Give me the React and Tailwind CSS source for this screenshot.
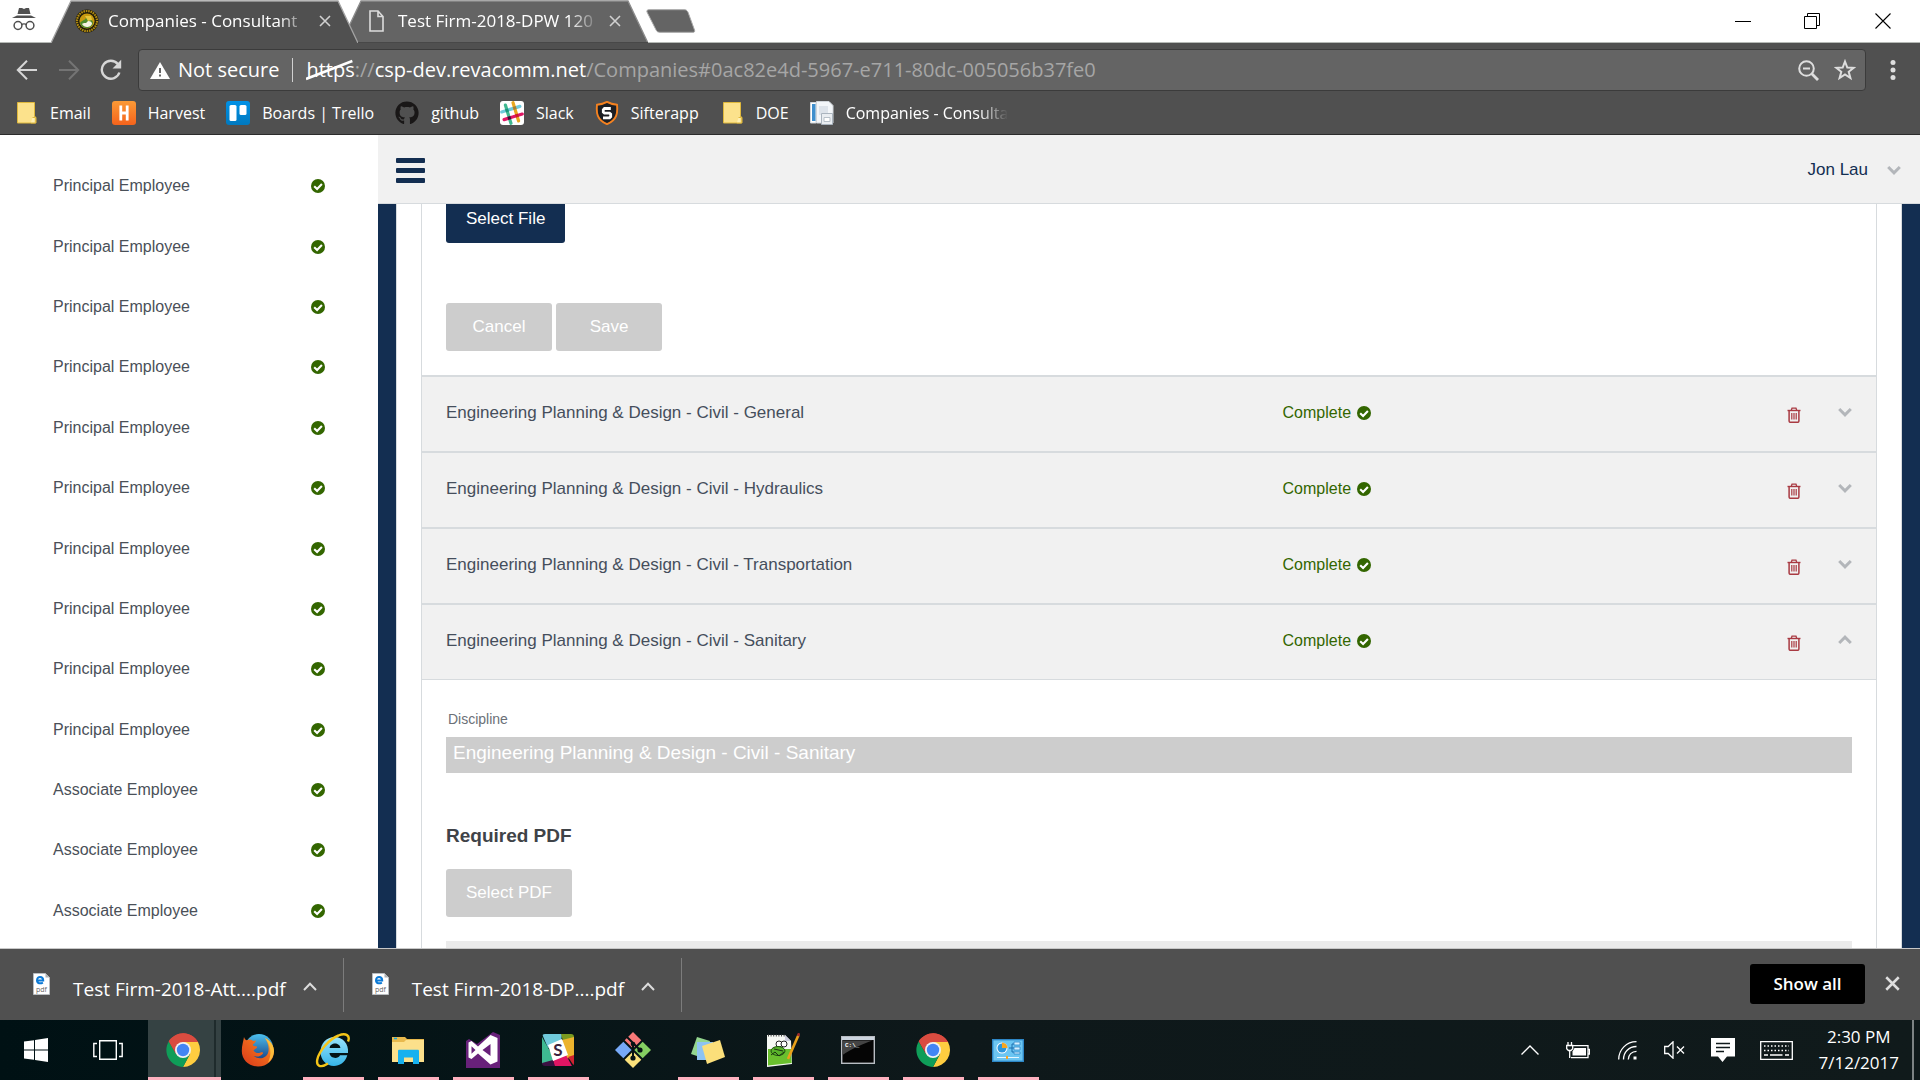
import React from 'react';
import { FaGithub } from 'react-icons/fa';

/* ---------- shared icons ---------- */

function CheckCircle() {
  return (
    <svg viewBox="0 0 14 14" className="size-[14px] shrink-0" aria-hidden="true">
      <circle cx="7" cy="7" r="7" fill="#336600" />
      <path d="M3.2 7.2 6.1 10 10.9 5.1" fill="none" stroke="#fff" strokeWidth="2.1" />
    </svg>
  );
}

function TrashIcon() {
  return (
    <svg viewBox="0 0 14 16" className="h-4 w-[14px]" fill="none" stroke="#a93a42" aria-hidden="true">
      <path d="M.5 3.5h13" strokeWidth="1.4" />
      <path d="M4.3 3.2 5 1.2h4l.7 2" strokeWidth="1.3" />
      <path d="M2.1 3.8V14c0 .8.5 1.3 1.2 1.3h7.4c.7 0 1.2-.5 1.2-1.3V3.8" strokeWidth="1.5" />
      <path d="M4.8 6v6.6M7 6v6.6M9.2 6v6.6" strokeWidth="1.2" />
    </svg>
  );
}

function ChevronThick({ up = false }) {
  return (
    <svg viewBox="0 0 14 10" className="h-[10px] w-[14px]" fill="none" stroke="#b3b6ba" strokeWidth="3" aria-hidden="true">
      <path d={up ? 'M1.2 8 7 2.2 12.8 8' : 'M1.2 2 7 7.8 12.8 2'} />
    </svg>
  );
}

function CloseX({ className, weight = 1.6 }) {
  return (
    <svg viewBox="0 0 12 12" className={className} fill="none" stroke="currentColor" strokeWidth={weight} aria-hidden="true">
      <path d="M1 1 11 11M11 1 1 11" />
    </svg>
  );
}

/* ---------- browser tabs ---------- */

function SealIcon() {
  return (
    <svg viewBox="0 0 24 24" className="size-6" aria-hidden="true">
      <circle cx="12" cy="12" r="11.5" fill="#1f1b0a" />
      <circle cx="12" cy="12" r="10" fill="none" stroke="#b08a12" strokeWidth="2.2" strokeDasharray="1.6 .8" />
      <circle cx="12" cy="12" r="7.6" fill="#c79a10" />
      <path d="M5 14c2-3 4-2 6-5 2 1 5 0 7 4 0 4-3 6-6 6s-6-1-7-5z" fill="#4f8a2c" />
      <path d="M7 15c2-2 4 0 5-2s4-1 5 1c0 3-3 4-5 4s-4-1-5-3z" fill="#f5f2e0" />
      <path d="M10 7h6l1 4-4 1z" fill="#e5c63b" />
    </svg>
  );
}

function PageIcon() {
  return (
    <svg viewBox="0 0 15 22" className="h-[22px] w-[15px]" fill="none" stroke="#dcdcdc" strokeWidth="1.6" aria-hidden="true">
      <path d="M1 1h8l5 5.500V21H1zM9 1v5.500h5" />
    </svg>
  );
}

function Tab({ active = false, icon, title }) {
  return (
    <div className={active ? 'relative z-10 h-[43px] w-[307px]' : 'relative -ml-[17px] h-[43px] w-[307px]'}>
      <svg viewBox="0 0 307 43" preserveAspectRatio="none" className="absolute inset-0 size-full" aria-hidden="true">
        <path d="M0 43 20 1H287L307 43z" fill={active ? '#505050' : '#646464'} />
        <path d="M0 43 20 1H287L307 43" fill="none" stroke={active ? '#a3a3a3' : '#8c8c8c'} strokeWidth="1.3" />
        {!active && <path d="M0 42.500H307" stroke="#484848" />}
      </svg>
      <div className="relative flex h-full items-center pr-[27px] pb-1.5 pl-6">
        <span className="flex w-[33px] shrink-0 items-center justify-start pt-1">{icon}</span>
        <span className="mt-1 min-w-0 flex-1 text-[17px] leading-6 whitespace-nowrap text-white [mask-image:linear-gradient(to_right,black_84%,transparent)]">
          {title}
        </span>
        <button aria-label="Close tab" className="mt-1 ml-2 shrink-0 text-[#d0d0d0]">
          <CloseX className="size-3" />
        </button>
      </div>
    </div>
  );
}

function TabStrip() {
  return (
    <div className="flex h-[43px] shrink-0 items-stretch border-b border-[#b5b9b5] bg-white">
      <div className="flex w-[51px] shrink-0 items-start pt-2 pl-3">
        <svg viewBox="0 0 24 23" className="h-[23px] w-6" aria-label="Incognito">
          <path d="M7 0h3l2 1 2-1h3l1.500 6H5.500z" fill="#505050" />
          <path d="M0 10 5 7.500h14l5 2.500z" fill="#505050" />
          <circle cx="6" cy="17.500" r="3.900" fill="none" stroke="#505050" strokeWidth="1.500" />
          <circle cx="18" cy="17.500" r="3.900" fill="none" stroke="#505050" strokeWidth="1.500" />
          <path d="M9.500 17c1-1.500 4-1.500 5 0" fill="none" stroke="#505050" strokeWidth="1.300" />
        </svg>
      </div>
      <Tab active icon={<SealIcon />} title="Companies - Consultant" />
      <Tab icon={<span className="pl-1"><PageIcon /></span>} title="Test Firm-2018-DPW 120" />
      <button aria-label="New tab" className="-ml-0.5">
        <svg viewBox="0 0 50 24" className="h-6 w-[50px]" aria-hidden="true">
          <path d="M3 .7h35c2 0 3 .6 4 2.500L48.500 21c.6 1.500 0 2.300-1.500 2.300H14c-2 0-3.200-.7-4-2.500L1 3C.5 1.500 1.300.7 3 .7z" fill="#646464" stroke="#a8a8a8" />
        </svg>
      </button>
      <div className="ml-auto flex h-[41px] items-center text-black">
        <button aria-label="Minimize" className="flex h-full w-[69px] items-center justify-center">
          <svg viewBox="0 0 16 16" className="size-4" stroke="currentColor"><path d="M0 8.500h16" /></svg>
        </button>
        <button aria-label="Restore" className="flex h-full w-[69px] items-center justify-center">
          <svg viewBox="0 0 16 16" className="size-4" fill="none" stroke="currentColor"><path d="M.5 3.500h12v12H.5zM3.500 3.500v-3h12v12h-3" /></svg>
        </button>
        <button aria-label="Close window" className="flex h-full w-[74px] items-center justify-center">
          <svg viewBox="0 0 16 16" className="size-4" fill="none" stroke="currentColor" strokeWidth="1.1"><path d="M.5.5l15 15M15.500.5l-15 15" /></svg>
        </button>
      </div>
    </div>
  );
}

/* ---------- toolbar ---------- */

function Toolbar() {
  return (
    <div className="flex h-[54px] shrink-0 items-center bg-[#505050] pr-6 pl-4">
      <button aria-label="Back" className="w-[42px] text-[#d6d6d6]">
        <svg viewBox="0 0 22 20" className="h-5 w-[22px]" fill="none" stroke="currentColor" strokeWidth="2"><path d="M21 10H2M11 .8 1.800 10l9.200 9.200" /></svg>
      </button>
      <button aria-label="Forward" disabled className="w-[42px] text-[#747474]">
        <svg viewBox="0 0 22 20" className="h-5 w-[22px]" fill="none" stroke="currentColor" strokeWidth="2"><path d="M1 10h19M11 .8l9.200 9.200-9.200 9.200" /></svg>
      </button>
      <button aria-label="Reload" className="w-[38px] text-[#d6d6d6]">
        <svg viewBox="0 0 22 22" className="size-[22px]" fill="none" stroke="currentColor" strokeWidth="2.400"><path d="M17.800 5A9 9 0 1 0 19.400 13.500" /><path d="M21.200.8v8.700h-8.700z" fill="currentColor" stroke="none" /></svg>
      </button>
      <div className="flex h-[42px] min-w-0 flex-1 items-center rounded border border-[#3b3b3b] bg-[#646464] pr-[9px] pl-[11px] text-[20px] leading-7 whitespace-nowrap text-white">
        <svg viewBox="0 0 20 17" className="h-[17px] w-5" aria-hidden="true">
          <path d="M10 0l10 17H0z" fill="#fff" />
          <path d="M10 6v5M10 12.500v2" stroke="#646464" strokeWidth="2" />
        </svg>
        <span className="ml-2">Not secure</span>
        <span className="mx-[13px] h-6 w-px bg-[#d0d0d0]" />
        <span className="relative">
          https
          <svg viewBox="0 0 50 28" preserveAspectRatio="none" className="absolute inset-0 size-full" aria-hidden="true">
            <path d="M0 23 48 5" stroke="#fff" strokeWidth="2.600" />
          </svg>
        </span>
        <span className="text-[#a6a6a6]">://</span>
        <span>csp-dev.revacomm.net</span>
        <span className="text-[#a6a6a6]">/Companies#0ac82e4d-5967-e711-80dc-005056b37fe0</span>
        <span className="ml-auto flex items-center gap-[15px] text-[#dedede]">
          <button aria-label="Zoom">
            <svg viewBox="0 0 21 21" className="block size-[21px]" fill="none" stroke="currentColor" strokeWidth="2"><circle cx="8.500" cy="8.500" r="7.300" /><path d="M5 8.500h7" /><path d="M13.800 13.800 20 20" strokeWidth="2.800" /></svg>
          </button>
          <button aria-label="Bookmark this page">
            <svg viewBox="0 0 22 22" className="block size-[22px]" fill="none" stroke="currentColor" strokeWidth="2"><path d="M11 2.500l2.300 6 6.400.3-5 4 1.700 6.200-5.400-3.500L5.600 19l1.700-6.200-5-4 6.400-.3z" /></svg>
          </button>
        </span>
      </div>
      <button aria-label="Menu" className="ml-6 text-[#dedede]">
        <svg viewBox="0 0 6 22" className="h-[22px] w-[6px]" fill="currentColor"><circle cx="3" cy="3.500" r="2.500" /><circle cx="3" cy="11" r="2.500" /><circle cx="3" cy="18.500" r="2.500" /></svg>
      </button>
    </div>
  );
}

/* ---------- bookmarks ---------- */

function FolderMark() {
  return (
    <svg viewBox="0 0 24 24" className="size-6" aria-hidden="true">
      <path d="M3.500 1.500h17v14l1.500.8v5.700H3.500z" fill="#fce28c" stroke="#dfb83c" />
      <path d="M18.500 16.500h2.800v5.500h-4.500" fill="#fff0b4" stroke="#dfb83c" />
    </svg>
  );
}

function HarvestMark() {
  return (
    <svg viewBox="0 0 24 24" className="size-6" aria-hidden="true">
      <defs><linearGradient id="hv" x1="0" y1="0" x2="0" y2="1"><stop offset="0" stopColor="#fb9a36" /><stop offset="1" stopColor="#f5631c" /></linearGradient></defs>
      <rect width="24" height="24" rx="3" fill="url(#hv)" />
      <path d="M8.800 4.500v15M15.200 4.500v15M9 12h6" stroke="#fff" strokeWidth="2.800" />
    </svg>
  );
}

function TrelloMark() {
  return (
    <svg viewBox="0 0 24 24" className="size-6" aria-hidden="true">
      <defs><linearGradient id="tr" x1="0" y1="0" x2="0" y2="1"><stop offset="0" stopColor="#0091e6" /><stop offset="1" stopColor="#0079bf" /></linearGradient></defs>
      <rect width="24" height="24" rx="3" fill="url(#tr)" />
      <rect x="3.500" y="4" width="7" height="16" rx="1.500" fill="#fff" />
      <rect x="13.500" y="4" width="7" height="10" rx="1.500" fill="#fff" />
    </svg>
  );
}

function SlackMark() {
  return (
    <svg viewBox="0 0 24 24" className="size-6" aria-hidden="true">
      <rect width="24" height="24" rx="3" fill="#fff" />
      <g transform="rotate(-17 12 12)" strokeWidth="3.200" strokeLinecap="round">
        <path d="M2.500 8h19" stroke="#6ecadc" />
        <path d="M8 2.500v19" stroke="#3eb890" />
        <path d="M16 2.500v19" stroke="#e9a820" />
        <path d="M2.500 16h19" stroke="#e01765" />
        <path d="M6.500 16h3" stroke="#361238" strokeLinecap="butt" />
        <path d="M14.500 16h3" stroke="#cc2027" strokeLinecap="butt" />
        <path d="M14.500 8h3" stroke="#a2803a" strokeLinecap="butt" />
        <path d="M6.500 8h3" stroke="#1a937d" strokeLinecap="butt" />
      </g>
    </svg>
  );
}

function SifterMark() {
  return (
    <svg viewBox="0 0 24 24" className="size-6" aria-hidden="true">
      <path d="M12 .8c3 1.700 6 2.600 10 3 .8 8 .2 15-10 19.400C1.800 18.800 1.200 11.800 2 3.800c4-.4 7-1.300 10-3z" fill="#1c1f24" stroke="#f58220" strokeWidth="1.900" />
      <path d="M15.800 7.500H9.500L8.300 8.800v2.400l1.200 1h5l1.200 1v2.400l-1.200 1.200H8" fill="none" stroke="#fff" strokeWidth="2.800" />
    </svg>
  );
}

function PageStackMark() {
  return (
    <svg viewBox="0 0 24 24" className="size-6" aria-hidden="true">
      <path d="M.5 1.500H6V22H.5z" fill="#fff" stroke="#cfd6dc" />
      <path d="M2 3h3.500v17H2z" fill="#3f8fcd" />
      <path d="M6.500.5H19l4 4V22H6.500z" fill="#f3f6f9" stroke="#d0d5da" />
      <path d="M9 5h9v9H9z" fill="#dde3ea" />
      <path d="M11.500 12.500h11v11h-11z" fill="#e9edf1" stroke="#aab4be" />
      <path d="M14 16.500h6v4h-6z" fill="#fff" stroke="#b7c0c8" />
    </svg>
  );
}

const bookmarks = [
  { label: 'Email', icon: <FolderMark /> },
  { label: 'Harvest', icon: <HarvestMark /> },
  { label: 'Boards | Trello', icon: <TrelloMark /> },
  { label: 'github', icon: <FaGithub className="size-6 text-[#191717]" /> },
  { label: 'Slack', icon: <SlackMark /> },
  { label: 'Sifterapp', icon: <SifterMark /> },
  { label: 'DOE', icon: <FolderMark /> },
  { label: 'Companies - Consulta', icon: <PageStackMark />, faded: true },
];

function Bookmarks() {
  return (
    <nav aria-label="Bookmarks" className="flex h-[38px] shrink-0 items-start gap-[21px] border-b border-[#2b2b2b] bg-[#505050] pl-[14px] text-[16px] leading-6 text-white">
      {bookmarks.map((b) => (
        <a key={b.label} href="#" className="flex items-center gap-3 pt-1">
          {b.icon}
          {b.faded ? (
            <span className="whitespace-nowrap [mask-image:linear-gradient(to_right,black_82%,transparent)]">{b.label}</span>
          ) : (
            <span className="whitespace-nowrap">{b.label}</span>
          )}
        </a>
      ))}
    </nav>
  );
}

/* ---------- page ---------- */

const employees = [
  ...Array(10).fill('Principal Employee'),
  ...Array(3).fill('Associate Employee'),
];

function Sidebar() {
  return (
    <aside className="flex w-[378px] shrink-0 flex-col bg-white pt-[21px] pb-[7px]">
      <ul className="flex flex-1 flex-col">
        {employees.map((name, i) => (
          <li key={i} className="flex flex-1">
            <a href="#" className="flex flex-1 items-center justify-between px-[53px] text-[16px] leading-6 text-[#4a5058]">
              {name}
              <CheckCircle />
            </a>
          </li>
        ))}
      </ul>
    </aside>
  );
}

const disciplines = [
  { name: 'Engineering Planning & Design - Civil - General' },
  { name: 'Engineering Planning & Design - Civil - Hydraulics' },
  { name: 'Engineering Planning & Design - Civil - Transportation' },
  { name: 'Engineering Planning & Design - Civil - Sanitary', open: true },
];

function DisciplineRow({ name, open }) {
  return (
    <div className="grid h-[76px] grid-cols-[59.5%_1fr_auto_auto] items-center border-t-2 border-[#d7dbde] bg-[#f1f1f1] px-6 pb-0.5">
      <span className="text-[17px] leading-6 text-[#454e5c]">{name}</span>
      <span className="flex items-center gap-1.5 text-[16px] leading-6 text-[#336600]">
        Complete
        <CheckCircle />
      </span>
      <button aria-label={'Delete ' + name} className="mt-1 mr-[37px]"><TrashIcon /></button>
      <button aria-label={(open ? 'Collapse ' : 'Expand ') + name} className="-mt-0.5"><ChevronThick up={open} /></button>
    </div>
  );
}

function Content() {
  return (
    <main className="flex min-w-0 flex-1 flex-col">
      <header className="flex h-[69px] shrink-0 items-center justify-between border-b border-[#d7dbde] bg-[#f1f1f1] pt-0.5 pr-[19px] pl-[18px]">
        <button aria-label="Toggle navigation" className="flex w-[29px] flex-col gap-[5px]">
          <span className="h-[5px] rounded-[1px] bg-[#132e51]" />
          <span className="h-[5px] rounded-[1px] bg-[#132e51]" />
          <span className="h-[5px] rounded-[1px] bg-[#132e51]" />
        </button>
        <button className="flex items-center gap-[19px] text-[17px] leading-6 text-[#132e51]">
          Jon Lau
          <ChevronThick />
        </button>
      </header>
      <div className="min-h-0 flex-1 overflow-hidden border-x-[18px] border-[#132e51]">
        <div className="border-x border-[#d7dbde] bg-white px-6">
          <section className="-mt-[9px] border-x border-[#d7dbde]">
            <div className="px-6 pb-6">
              <button className="block h-12 rounded-[3px] bg-[#132e51] px-5 text-[17px] leading-6 text-white">Select File</button>
              <div className="mt-[60px] flex gap-1">
                <button disabled className="h-12 w-[106px] rounded-[3px] bg-[#cdcdcd] text-[17px] leading-6 text-white">Cancel</button>
                <button disabled className="h-12 w-[106px] rounded-[3px] bg-[#cdcdcd] text-[17px] leading-6 text-white">Save</button>
              </div>
            </div>
            {disciplines.map((d) => <DisciplineRow key={d.name} {...d} />)}
            <div className="border-t border-[#d7dbde] px-6 pt-[29px]">
              <label htmlFor="discipline" className="ml-0.5 block text-[14px] leading-5 text-[#6b7077]">Discipline</label>
              <select id="discipline" disabled className="mt-2 block h-9 w-full appearance-none bg-[#cdcdcd] pb-1 pl-[7px] text-[19px] leading-6 text-white opacity-100">
                <option>Engineering Planning &amp; Design - Civil - Sanitary</option>
              </select>
              <h2 className="mt-[51px] text-[19px] leading-6 font-bold text-[#3f4348]">Required PDF</h2>
              <button disabled className="mt-[21px] block h-12 rounded-[3px] bg-[#cdcdcd] px-5 text-[17px] leading-6 text-white">Select PDF</button>
              <div className="mt-6 h-12 bg-[#ebebeb]" />
            </div>
          </section>
        </div>
      </div>
    </main>
  );
}

/* ---------- downloads ---------- */

function PdfIcon() {
  return (
    <svg viewBox="0 0 17 22" className="h-[22px] w-[17px]" aria-hidden="true">
      <path d="M.5.5h12l4 4v17H.5z" fill="#fff" stroke="#b9bdc1" />
      <path d="M12.500.5v4h4z" fill="#aeb2b6" />
      <path d="M3.800 7.400h6.400c0-4.600-6.200-4.600-6.200-.2 0 3.500 3.600 3.700 5.900 2.400" fill="none" stroke="#0d7ad6" strokeWidth="2" />
      <text x="8.500" y="18.500" textAnchor="middle" fontSize="7" fill="#666" fontFamily="Open Sans, sans-serif">pdf</text>
    </svg>
  );
}

function Download({ name }) {
  return (
    <div className="flex h-[54px] items-start border-r border-[#7c7c7c] pr-[26px] pl-7">
      <span className="mt-[15px]"><PdfIcon /></span>
      <button className="mt-[17px] ml-[23px] text-[19px] leading-7 whitespace-nowrap text-white">{name}</button>
      <button aria-label={'Options for ' + name} className="mt-6 ml-[17px] text-[#dcdcdc]">
        <svg viewBox="0 0 14 9" className="block h-[9px] w-[14px]" fill="none" stroke="currentColor" strokeWidth="2"><path d="M1 8 7 1.800 13 8" /></svg>
      </button>
    </div>
  );
}

function DownloadBar() {
  return (
    <div className="flex h-[72px] shrink-0 items-center border-t border-[#c8c8c8] bg-[#505050] pl-[5px]">
      <Download name="Test Firm-2018-Att....pdf" />
      <Download name="Test Firm-2018-DP....pdf" />
      <button className="mb-0.5 ml-auto h-10 w-[115px] rounded-[3px] bg-black text-[17px] leading-6 font-semibold text-white">Show all</button>
      <button aria-label="Close downloads bar" className="mx-[20px] mb-0.5 text-[#dedede]"><CloseX weight={2} className="block size-[15px]" /></button>
    </div>
  );
}

/* ---------- taskbar ---------- */

function WindowsIcon() {
  return (
    <svg viewBox="0 0 24 24" className="size-6" fill="#fff" aria-hidden="true">
      <path d="M0 3.600 10 2.200v9.300H0zM11 2 24 0v11.500H11zM0 12.500h10v9.300L0 20.400zM11 12.500h13V24l-13-2z" />
    </svg>
  );
}

function TaskViewIcon() {
  return (
    <svg viewBox="0 0 30 20" className="h-5 w-[30px]" fill="none" stroke="#fff" strokeWidth="1.400" aria-hidden="true">
      <path d="M6.700.7h16.600v18.600H6.700zM4 3.500H.8v13H4M26 3.500h3.200v13H26" />
    </svg>
  );
}

function ChromeIcon() {
  return (
    <svg viewBox="0 0 34 34" className="size-[34px]" aria-hidden="true">
      <path d="M17 17 2.700 8.400A17 17 0 0 1 32 9H17z" fill="#db4437" />
      <path d="M17 9h15A17 17 0 0 1 17 34l7-13z" fill="#ffcd40" />
      <path d="M10 21 2.700 8.400A17 17 0 0 0 17 34l7-13z" fill="#0f9d58" />
      <path d="M2.700 8.400 10 21l7-12h15A17 17 0 0 0 2.700 8.400z" fill="#d94c40" />
      <circle cx="17" cy="17" r="8" fill="#f1f1f1" />
      <circle cx="17" cy="17" r="6.200" fill="#4285f4" />
    </svg>
  );
}

function FirefoxIcon() {
  return (
    <svg viewBox="0 0 34 34" className="size-[34px]" aria-hidden="true">
      <defs>
        <linearGradient id="ffb" x1="0" y1="0" x2="0" y2="1"><stop offset="0" stopColor="#4cc0ee" /><stop offset="1" stopColor="#14387f" /></linearGradient>
        <linearGradient id="ffo" x1="0" y1="1" x2="1" y2="0"><stop offset="0" stopColor="#d9371a" /><stop offset=".6" stopColor="#ee6b1d" /><stop offset="1" stopColor="#ffc83a" /></linearGradient>
      </defs>
      <circle cx="18" cy="15" r="14" fill="url(#ffb)" />
      <path d="M3 4c.5 2 1.500 3 3 3.200C8 6 10.500 6.500 12 8l3-.5c-.5 2-2 3.200-3.200 4 0 1.200.8 1.700 2.800 1.700 1 0 1.800.4 1.400 1.400-1 1.300-3 1.500-3.500 3 1.500 2.600 4.500 3 7 2 1.500-.6 3-.2 2.500.8-2 3-6 4-9.500 2.500 5 4.500 14 2.500 15-5 .6-5-1-9-3.500-13 5 2.500 9 7 9 13.500C33 27 26 33.500 17 33.500S.8 27 .8 18C.8 12 2.500 8 3 4z" fill="url(#ffo)" />
      <path d="M24 5c6 3.500 9 8 9 13.500-.5 5-3 9-6 11 4-8 3-17-3-24.500z" fill="#fdc53f" opacity=".85" />
    </svg>
  );
}

function IeIcon() {
  return (
    <svg viewBox="0 0 36 36" className="size-9" aria-hidden="true">
      <defs><linearGradient id="ie" x1="0" y1="0" x2="0" y2="1"><stop offset="0" stopColor="#9be4fb" /><stop offset="1" stopColor="#35b4e8" /></linearGradient></defs>
      <path d="M33 21H14.500c.5 5.500 8.500 6.500 10.500 2.300h7.300C30 31 24.500 34 19 34 11 34 5.500 27.500 5.500 20 5.500 11.500 11.500 5 19.500 5S34 11.500 33 21zM14.600 16h10.800c-.5-6-10.300-6-10.800 0z" fill="url(#ie)" />
      <path d="M33 9.500c2.500-6-2-9-9.500-6C14 7 4 19.500 2.300 27.500 1 34 5.500 36.500 13 31.500" fill="none" stroke="#f5c518" strokeWidth="2.400" />
    </svg>
  );
}

function ExplorerIcon() {
  return (
    <svg viewBox="0 0 34 28" className="h-7 w-[34px]" aria-hidden="true">
      <path d="M1 1h13l2 2h17v22H1z" fill="#e8b94d" />
      <path d="M1 6h12l2-2h18v22H1z" fill="#fce08b" />
      <path d="M3 2.500h3" stroke="#19a7e0" strokeWidth="1.500" />
      <path d="M7 28V15c0-.8.5-1.300 1.300-1.300h18.400c.8 0 1.300.5 1.300 1.300v13h-6v-6.500h-9V28z" fill="#17b1ef" />
    </svg>
  );
}

function VisualStudioIcon() {
  return (
    <svg viewBox="0 0 34 36" className="h-9 w-[34px]" aria-hidden="true">
      <path d="M0 9 3 7l8 5L27 0l7 3v33H0z" fill="#68217a" />
      <path fillRule="evenodd" d="M2.500 10.500 5.500 9l6.500 5.500L24.500 3l7 3v23.500l-7 3L12 21.500 5.500 27l-3-1.500zM5.500 14.200v7.600l4-3.800zM24.500 12l-8 6 8 6z" fill="#fff" />
    </svg>
  );
}

function SlackAppIcon() {
  return (
    <svg viewBox="0 0 32 32" className="size-8" aria-hidden="true">
      <defs><clipPath id="sc"><rect width="32" height="32" rx="3" /></clipPath></defs>
      <g clipPath="url(#sc)">
        <path d="M0 0h20l-1 8L6 14z" fill="#70cadb" />
        <path d="M19 0h13v5l-11 2z" fill="#7a9a20" />
        <path d="M32 3v22l-8-1-4-18z" fill="#ecb32d" />
        <path d="M0 3v27l13-4z" fill="#3eb991" />
        <path d="M32 21v11l-6-9z" fill="#cf2330" />
        <path d="M11 26 24 21l6 11H12z" fill="#e01563" />
        <path d="M0 29l11-3 2 6H0z" fill="#3b1143" />
        <path d="M6 11 20 5l6 16-15 6z" fill="#fff" />
      </g>
      <text x="16" y="22" textAnchor="middle" fontSize="17" fontWeight="700" fill="#3b2340" fontFamily="Lato, sans-serif">S</text>
    </svg>
  );
}

function GitIcon() {
  return (
    <svg viewBox="0 0 36 36" className="size-9" aria-hidden="true">
      <path d="M18 0l8.300 8.300L18 16.600 9.700 8.300z" fill="#f87979" />
      <path d="M27.700 9.700 36 18l-8.300 8.300-8.300-8.300z" fill="#85cf62" />
      <path d="M8.300 9.700l8.300 8.300-8.300 8.300L0 18z" fill="#77a9f7" />
      <path d="M18 19.400l8.300 8.300L18 36l-8.300-8.300z" fill="#fbe27c" />
      <path d="M12 5l6 6v16M18 11l7 7" fill="none" stroke="#071214" strokeWidth="2" />
      <circle cx="18" cy="26" r="2.600" fill="#071214" />
      <circle cx="25" cy="18" r="2.600" fill="#071214" />
      <circle cx="18" cy="12" r="2.300" fill="#071214" />
    </svg>
  );
}

function StickyNotesIcon() {
  return (
    <svg viewBox="0 0 34 28" className="h-7 w-[34px]" aria-hidden="true">
      <path d="M6 1l13 4-4 18L0 18z" fill="#93d58f" />
      <path d="M6 6h16v18H6z" fill="#8dc3f2" />
      <path d="M11 10 29 4l5 17-18 7z" fill="#fbdf7a" />
    </svg>
  );
}

function NotepadIcon() {
  return (
    <svg viewBox="0 0 34 34" className="size-[34px]" aria-hidden="true">
      <path d="M1 2h18l6 6 1 23-25 3z" fill="#f6f8f4" />
      <path d="M2 16h23l.7 14L2 32.500z" fill="#6abf2e" />
      <path d="M2 2.500h17" stroke="#444" strokeWidth="2" strokeDasharray="1 1.600" />
      <path d="M19 2v6h6z" fill="#ccd" />
      <circle cx="13" cy="11" r="3" fill="#fff" stroke="#222" /><circle cx="18" cy="11" r="3" fill="#fff" stroke="#222" />
      <ellipse cx="12" cy="18" rx="7" ry="4.500" fill="#58b32a" stroke="#1e4d10" />
      <path d="M5 22l4-3 4 4 5-4M8 16l9 2" fill="none" stroke="#1d3212" />
      <path d="M22 26 32.500 2" stroke="#e9a11b" strokeWidth="2.600" />
      <path d="M32 3l1.200-2.800" stroke="#9e2b2b" strokeWidth="2.600" />
    </svg>
  );
}

function TerminalIcon() {
  return (
    <svg viewBox="0 0 34 28" className="h-7 w-[34px]" aria-hidden="true">
      <rect x=".7" y=".7" width="32.600" height="26.600" fill="#050505" stroke="#b9bdc3" strokeWidth="1.400" />
      <path d="M1 1h32v3H1z" fill="#ccd5df" />
      <path d="M1.500 4.500h30C22 8 12 12 1.500 19z" fill="#444" />
      <text x="4" y="11" fontSize="6" fontWeight="700" fill="#fff" fontFamily="Liberation Mono, monospace">C:\_</text>
    </svg>
  );
}

function ControlPanelIcon() {
  return (
    <svg viewBox="0 0 32 23" className="h-[23px] w-8" aria-hidden="true">
      <rect x=".7" y=".7" width="30.600" height="21.600" fill="#6cc6f2" stroke="#2d86c6" strokeWidth="1.400" />
      <circle cx="10" cy="9" r="5.500" fill="#fff" />
      <circle cx="10" cy="9" r="4.500" fill="#2e97dc" />
      <path d="M10 9V3.500A5.500 5.500 0 0 1 15.500 9z" fill="#f6a623" />
      <path d="M17 9h3V5h2M20 9h2M20 9v4h2" fill="none" stroke="#1c6fae" />
      <path d="M22 3h6v3h-6zM22 8h6v3h-6zM22 13h6v2h-6z" fill="#d5f0ff" stroke="#2d86c6" strokeWidth=".8" />
      <path d="M5 18.500h22" stroke="#e7f7ff" /><path d="M14 17h2v3h-2z" fill="#f6a623" />
    </svg>
  );
}

const apps = [
  { label: 'Firefox', icon: <FirefoxIcon />, running: false },
  { label: 'Internet Explorer', icon: <IeIcon />, running: true },
  { label: 'File Explorer', icon: <ExplorerIcon />, running: true },
  { label: 'Visual Studio', icon: <VisualStudioIcon />, running: true },
  { label: 'Slack', icon: <SlackAppIcon />, running: true },
  { label: 'Git', icon: <GitIcon />, running: false },
  { label: 'Sticky Notes', icon: <StickyNotesIcon />, running: true },
  { label: 'Notepad++', icon: <NotepadIcon />, running: true },
  { label: 'Command Prompt', icon: <TerminalIcon />, running: true },
  { label: 'Google Chrome', icon: <ChromeIcon />, running: true },
  { label: 'Control Panel', icon: <ControlPanelIcon />, running: true },
];

function Taskbar() {
  return (
    <footer className="flex h-[60px] shrink-0 items-stretch bg-linear-to-r from-[#001114] via-[#0e181a] to-[#101a1b] text-white">
      <button aria-label="Start" className="flex w-[72px] items-center justify-center"><WindowsIcon /></button>
      <button aria-label="Task View" className="mr-1 flex w-[72px] items-center justify-center"><TaskViewIcon /></button>
      <button aria-label="Google Chrome windows" className="flex w-[73px] flex-col">
        <span className="flex w-full flex-1">
          <span className="flex flex-1 items-center justify-center bg-[#354243] pt-[3px] pl-1"><ChromeIcon /></span>
          <span className="w-[2px] bg-[#1f2b2c]" />
          <span className="w-[5px] bg-[#354243]" />
        </span>
        <span className="h-[3px] w-full bg-[#feb1bf]" />
      </button>
      {apps.map((a) => (
        <button key={a.label} aria-label={a.label} className="flex w-[75px] flex-col items-center">
          <span className="flex flex-1 items-center justify-center pt-[3px] pr-px">{a.icon}</span>
          <span className={a.running ? 'h-[3px] w-[61px] bg-[#feb1bf]' : 'h-[3px] w-[61px]'} />
        </button>
      ))}
      <div className="ml-auto flex items-center">
        <button aria-label="Show hidden icons" className="mr-[27px]">
          <svg viewBox="0 0 18 10" className="block h-[10px] w-[18px]" fill="none" stroke="#fff" strokeWidth="1.400"><path d="M.5 9.500 9 1l8.500 8.500" /></svg>
        </button>
        <button aria-label="Battery" className="mr-7">
          <svg viewBox="0 0 24 17" className="block h-[17px] w-6" fill="none" stroke="#fff" strokeWidth="1.300"><path d="M7 3.700h15v12H5M22 7.500h1.500v4.500H22" /><path d="M8.500 6h11.500v7.500H6.500V9.500z" fill="#fff" stroke="none" /><path d="M2 0v3M5.500 0v3M.7 3.500h6v3.300l-1.700 1.700H2.400L.7 6.800zM3.700 8.500V16" /></svg>
        </button>
        <button aria-label="Wi-Fi" className="mr-[27px]">
          <svg viewBox="0 0 19 19" className="block size-[19px]" fill="none" stroke="#fff" strokeWidth="1.300"><path d="M.7 18.500C.7 8.500 8.500.7 18.500.7M5.500 18.500c0-7.500 5.500-13 13-13M10.300 18.500c0-4.700 3.500-8.200 8.200-8.200" /><path d="M15.500 15.500h3v3h-3z" fill="#fff" stroke="none" /></svg>
        </button>
        <button aria-label="Volume muted" className="mr-[26px]">
          <svg viewBox="0 0 21 18" className="block h-[18px] w-[21px]" fill="none" stroke="#fff" strokeWidth="1.300"><path d="M.7 5.500h3.500L9 .9v16.200L4.200 12.500H.7zM13 5.500l7 7M20 5.500l-7 7" /></svg>
        </button>
        <button aria-label="Notifications" className="mr-[25px]">
          <svg viewBox="0 0 24 24" className="block size-6"><path d="M0 0h24v18.500h-8L11.500 24 7 18.500H0z" fill="#fff" /><path d="M5 5.500h14M5 9.500h14M5 13.500h8" stroke="#0e181a" strokeWidth="1.300" /></svg>
        </button>
        <button aria-label="Touch keyboard" className="mr-[25px]">
          <svg viewBox="0 0 33 19" className="block h-[19px] w-[33px]" fill="none" stroke="#fff" strokeWidth="1.300"><path d="M.7.7h31.600v17.600H.7z" /><path d="M4 5h25M4 9.500h25" strokeDasharray="1.500 2" strokeWidth="1.500" /><path d="M4 14h4M10 14h12.500M25 14h4" strokeWidth="1.500" /></svg>
        </button>
        <div className="mr-[13px] text-center text-[17px] leading-[26px]">
          <div>2:30 PM</div>
          <div>7/12/2017</div>
        </div>
        <button aria-label="Show desktop" className="h-full w-2 border-l-2 border-[#7d8384]" />
      </div>
    </footer>
  );
}

export default function App() {
  return (
    <div className="flex h-screen flex-col overflow-hidden bg-white font-['Open_Sans',sans-serif]">
      <TabStrip />
      <Toolbar />
      <Bookmarks />
      <div className="flex min-h-0 flex-1 font-['Liberation_Sans',Arial,sans-serif]">
        <Sidebar />
        <Content />
      </div>
      <DownloadBar />
      <Taskbar />
    </div>
  );
}
